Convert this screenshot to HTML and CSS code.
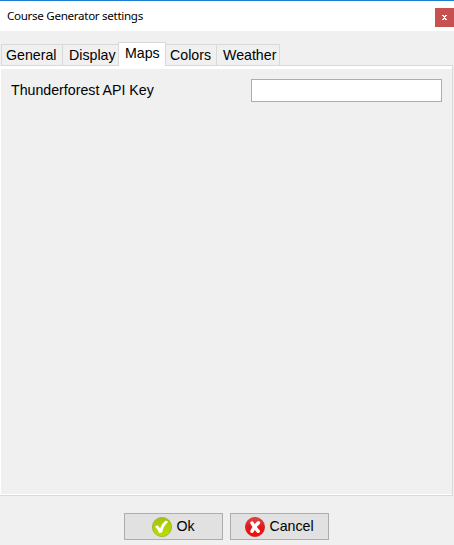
FILE: index.html
```html
<!DOCTYPE html>
<html lang="en">
<head>
<meta charset="utf-8">
<title>Course Generator settings</title>
<link rel="stylesheet" href="styles.css">
</head>
<body>
<div class="dialog">
  <header class="titlebar">
    <span class="title">Course Generator settings</span>
    <button class="close" aria-label="Close"><svg width="5" height="5" viewBox="0 0 5 5" shape-rendering="crispEdges"><path fill="#fff" d="M0 0h2v1h1v-1h2v1h-1v1h-1v1h1v1h1v1h-2v-1h-1v1h-2v-1h1v-1h1v-1h-1v-1h-1z"/></svg></button>
  </header>
  <nav class="tabs">
    <div class="tab general">General</div>
    <div class="tab display">Display</div>
    <div class="tab maps active">Maps</div>
    <div class="tab colors">Colors</div>
    <div class="tab weather">Weather</div>
    <div class="rest"></div>
  </nav>
  <main class="panel">
    <label class="label" for="key">Thunderforest API Key</label>
    <input class="field" id="key" type="text">
  </main>
  <footer class="actions">
    <button class="btn ok">
      <svg width="20" height="20" viewBox="0 0 20 20">
        <defs><linearGradient id="g" x1="0" y1="0" x2="0" y2="1"><stop offset="0" stop-color="#a3c312"/><stop offset="1" stop-color="#b9e000"/></linearGradient></defs>
        <circle cx="10" cy="10" r="9.6" fill="url(#g)" stroke="#8fae10" stroke-width=".7"/>
        <path d="M3 9.6Q5.4 8 6.3 9L8 11.4Q9.6 6.8 13.4 3.8Q15.4 3.8 16 5Q11.600 9 10.200 15Q8.600 16.400 7 15.800Q5.600 12 3 9.600Z" fill="#fff"/>
      </svg>
      <span>Ok</span>
    </button>
    <button class="btn cancel">
      <svg width="20" height="20" viewBox="0 0 20 20">
        <defs><linearGradient id="r" x1="0" y1="0" x2="0" y2="1"><stop offset="0" stop-color="#e34848"/><stop offset=".45" stop-color="#e01b1b"/><stop offset="1" stop-color="#ff0808"/></linearGradient></defs>
        <circle cx="10" cy="10" r="9.6" fill="url(#r)" stroke="#c51a1a" stroke-width=".7"/>
        <path d="M7 6Q9 10 13.200 14.200M13.400 5.800Q9.500 9 7 14.200" fill="none" stroke="#fff" stroke-width="3.500" stroke-linecap="round"/>
      </svg>
      <span>Cancel</span>
    </button>
  </footer>
</div>
</body>
</html>
```
FILE: styles.css
```css
* { box-sizing: border-box; }
body { margin: 0; background: #f0f0f0; color: #000; font: 14.2px/17px "Liberation Sans", Arial, sans-serif; }
.dialog { width: 454px; height: 545px; overflow: hidden; display: flex; flex-direction: column; background: #f0f0f0; }
.titlebar { flex: none; height: 31px; border-top: 1px solid #1a7fd4; background: #fff; display: flex; justify-content: space-between; padding-left: 7px; }
.title { font: 11.6px/16px "Noto Sans", sans-serif; letter-spacing: -.3px; margin-top: 7px; }
.close { width: 19px; height: 19px; margin: 7px 0 0; padding: 0; border: 0; background: #c75050; display: flex; align-items: center; justify-content: center; }
.tabs { flex: none; height: 24px; margin-top: 11px; display: flex; align-items: flex-end; padding-left: 1px; }
.tab { height: 22px; border: 1px solid #d9d9d9; border-right: 0; padding: 2px 0 0 4px; white-space: nowrap; }
.general { width: 61px; }
.display { width: 56px; padding-left: 6px; }
.maps { width: 48px; padding-left: 6px; }
.active { height: 24px; background: #fff; border-right: 1px solid #d9d9d9; border-bottom: 0; }
.colors { width: 50px; border-left: 0; }
.weather { width: 64px; padding-left: 6px; border-right: 1px solid #d9d9d9; }
.rest { width: 173px; height: 1px; background: #d9d9d9; }
.panel { flex: none; width: 453px; height: 430px; border: 1px solid #d9d9d9; border-width: 0 1px 1px 0; box-shadow: inset 1px 0 #fff, inset 0 3px #fff, inset 0 -1px #fff; padding: 13px 10px 0 11px; display: flex; align-items: flex-start; justify-content: space-between; }
.label { margin-top: 3px; }
.field { width: 191px; height: 23px; border: 1px solid #adadad; background: #fff; padding: 0 4px; }
.actions { margin-top: 17px; display: flex; gap: 7px; padding-left: 124px; }
.btn { width: 99px; height: 27px; padding: 0; border: 1px solid #adadad; background: #e1e1e1; display: flex; align-items: center; justify-content: center; gap: 4px; font: inherit; color: inherit; }
```
